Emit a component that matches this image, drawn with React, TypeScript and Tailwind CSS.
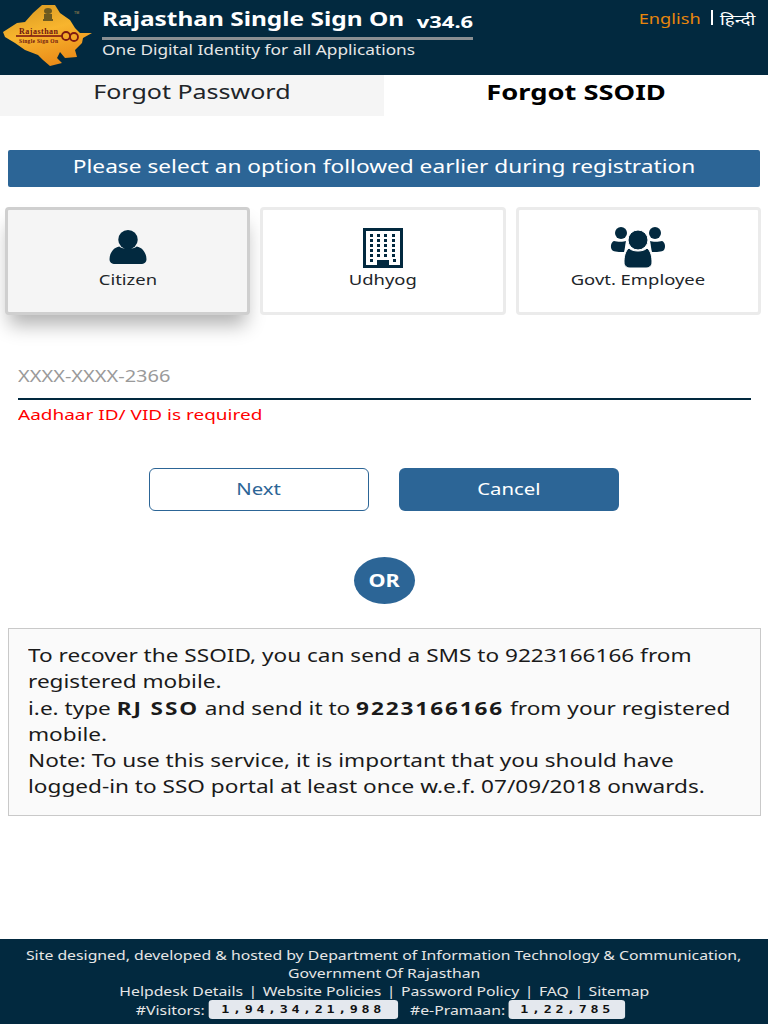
const Logo = () => (
  <svg viewBox="0 0 100 75" className="h-[75px] w-[100px] shrink-0">
    <defs>
      <linearGradient id="rj" x1="0.2" y1="0" x2="0.6" y2="1">
        <stop offset="0" stopColor="#d99a22" />
        <stop offset="0.45" stopColor="#f8b52e" />
        <stop offset="1" stopColor="#ea8a18" />
      </linearGradient>
    </defs>
    <path
      d="M3 32 L17 23 L25 22 L33 13 L42 5 L55 5 L60 13 L70 20 L75 28 L80 33 L92 33 L83 38 L82 43 L75 50 L77 57 L65 58 L60 52 L57 58 L62 63 L50 66 L43 60 L38 55 L25 50 L15 43 L10 40 L5 37 Z"
      fill="url(#rj)"
    />
    <g fill="#6d5a20">
      <ellipse cx="48" cy="11" rx="4" ry="3" />
      <rect x="44" y="14" width="8" height="5" />
      <rect x="43" y="19" width="10" height="2" />
    </g>
    <text x="19" y="34" fontSize="8" fontWeight="700" fill="#6f1410" textLength="39" fontFamily="Liberation Serif, serif">
      Rajasthan
    </text>
    <rect x="16" y="35.2" width="46" height="1.6" fill="#7d1a12" />
    <circle cx="66" cy="36" r="4" fill="none" stroke="#7d1a12" strokeWidth="1.8" />
    <circle cx="74" cy="37" r="4" fill="none" stroke="#7d1a12" strokeWidth="1.8" />
    <text x="19" y="42.5" fontSize="5.5" fontWeight="700" fill="#6f1410" textLength="39" fontFamily="Liberation Serif, serif">
      Single Sign On
    </text>
    <text x="74" y="14" fontSize="3.5" fill="#b99a50" fontFamily="Liberation Sans, sans-serif">
      TM
    </text>
  </svg>
);

const Citizen = () => (
  <svg viewBox="0 0 38 36" className="mb-[3px] h-[35px] w-[38px]" fill="#02293f">
    <ellipse cx="19" cy="10" rx="10" ry="10" />
    <path d="M10 17 C13 20 25 20 28 17 C34 18 38 24 38 30 C38 33 36 35 32 35 H6 C2 35 0 33 0 30 C0 24 4 18 10 17 Z" />
  </svg>
);

const Building = () => (
  <svg viewBox="0 0 40 40" className="h-[40px] w-[40px]">
    <rect width="40" height="40" fill="#02293f" />
    <rect x="3" y="3" width="34" height="34" fill="#fff" />
    <path d="M14 32 h12 v8 h-12 Z" fill="#02293f" />
    <g fill="#02293f">
      {[6, 11, 16, 21, 26].map((y) =>
        [7, 14, 21, 29].map((x) => <rect key={`${x}-${y}`} x={x} y={y} width="3" height="3" />),
      )}
      <rect x="7" y="31" width="3" height="3" />
      <rect x="30" y="31" width="3" height="3" />
    </g>
  </svg>
);

const Group = () => (
  <svg viewBox="0 0 56 41" className="h-[41px] w-[56px]" fill="#02293f">
    <circle cx="11" cy="6" r="6" />
    <circle cx="45" cy="6" r="6" />
    <path d="M4 14 C7 15 14 15 16 14 C15 18 15 22 14 25 C10 25 4 25 2 23 C0 20 1 15 4 14 Z" />
    <path d="M52 14 C49 15 42 15 40 14 C41 18 41 22 42 25 C46 25 52 25 54 23 C56 20 55 15 52 14 Z" />
    <circle cx="28" cy="13" r="10" stroke="#fff" strokeWidth="1" />
    <path d="M19 21 C22 25 34 25 37 21 C41 24 42 30 42 35 C42 39 39 41 36 41 H20 C17 41 14 39 14 35 C14 30 15 24 19 21 Z" stroke="#fff" strokeWidth="1" />
  </svg>
);

const Tile = ({ label, active, icon }: { label: string; active?: boolean; icon: React.ReactNode }) => (
  <div
    className={
      active
        ? "flex h-[108px] flex-col items-center rounded-[4px] border-[3px] border-[#cfcfcf] bg-[#f5f5f5] shadow-[0_14px_18px_-4px_rgba(0,0,0,0.3)]"
        : "flex h-[108px] flex-col items-center rounded-[4px] border-[3px] border-[#ebebeb] bg-white"
    }
  >
    <div className="flex h-[58px] items-end">{icon}</div>
    <span className="scale-x-[1.27] text-[14.5px] leading-[22px] text-[#212529]">{label}</span>
  </div>
);

const Sep = () => <span className="mx-[4.5px]">|</span>;

export default function App() {
  return (
    <div className="flex h-[1024px] flex-col overflow-hidden bg-white font-['Noto_Sans',sans-serif] text-[#212529]">
      <header className="flex h-[75px] bg-[#02293f] pr-[13px]">
        <Logo />
        <div className="ml-[2px] w-[371px] pt-[6px]">
          <div className="flex items-end justify-between border-b-[3px] border-[#8a8f92] pb-[5px] text-white">
            <span className="origin-left scale-x-[1.286] text-[19px] font-bold leading-[26px]">Rajasthan Single Sign On</span>
            <span className="origin-right scale-x-[1.37] text-[16px] font-bold leading-[20px]">v34.6</span>
          </div>
          <div className="origin-left scale-x-[1.28] whitespace-nowrap text-[13.5px] leading-[20px] text-[#e6e6e6]">
            One Digital Identity for all Applications
          </div>
        </div>
        <div className="ml-auto flex items-start pt-[8px] text-[15px] leading-[22px]">
          <span className="origin-right scale-x-[1.3] text-[14px] text-[#e8860c]">English</span>
          <span className="ml-[10px] mr-[14px] mt-[2px] h-[15px] w-[2px] bg-white" />
          <span className="origin-right scale-x-[1.25] text-white">हिन्दी</span>
        </div>
      </header>

      <div className="grid h-[41px] grid-cols-2">
        <div className="flex items-start justify-center bg-[#f5f5f5] pt-[3px]">
          <span className="scale-x-[1.25] text-[20px] leading-[28px] text-[#212529]">Forgot Password</span>
        </div>
        <div className="flex items-start justify-center pt-[3px]">
          <span className="scale-x-[1.3] text-[21px] font-bold leading-[28px] text-black">Forgot SSOID</span>
        </div>
      </div>

      <div className="mx-[8px] mt-[34px] flex h-[37px] items-start justify-center rounded-[2px] bg-[#2c6596] pt-[3px] text-white">
        <span className="scale-x-[1.26] whitespace-nowrap text-[18px] leading-[26px]">Please select an option followed earlier during registration</span>
      </div>

      <div className="mt-[20px] grid grid-cols-3 gap-[10px] pl-[5px] pr-[7px]">
        <Tile label="Citizen" active icon={<Citizen />} />
        <Tile label="Udhyog" icon={<Building />} />
        <Tile label="Govt. Employee" icon={<Group />} />
      </div>

      <div className="mx-[18px] mt-[49px] w-[733px] border-b-2 border-[#02293f] pb-[10px] leading-[24px]">
        <div className="origin-left scale-x-[1.25] text-[16px] text-[#9a9a9a]">XXXX-XXXX-2366</div>
      </div>
      <div className="ml-[18px] mt-[3px] origin-left scale-x-[1.265] text-[15px] leading-[22px] text-[#ff0000]">Aadhaar ID/ VID is required</div>

      <div className="mt-[43px] flex justify-center gap-[30px]">
        <button className="h-[43px] w-[220px] rounded-[6px] border-[1.5px] border-[#2c6596] bg-white pb-[2px] text-[#2c6596]">
          <span className="inline-block scale-x-[1.27] text-[16px]">Next</span>
        </button>
        <button className="h-[43px] w-[220px] rounded-[6px] bg-[#2c6596] pb-[2px] text-white">
          <span className="inline-block scale-x-[1.27] text-[16px]">Cancel</span>
        </button>
      </div>

      <div className="mt-[46px] flex justify-center">
        <div className="flex h-[47px] w-[61px] items-center justify-center rounded-[50%] bg-[#2c6596] text-white">
          <span className="scale-x-[1.2] text-[18px] font-bold">OR</span>
        </div>
      </div>

      <div className="mx-[8px] mt-[24px] h-[188px] w-[753px] border border-[#c9c9c9] bg-[#fafafa] px-[19px] py-[13px]">
        <div className="w-[575px] origin-left scale-x-[1.255] text-[18px] leading-[26.3px] text-[#1a1a1a]">
          To recover the SSOID, you can send a SMS to 9223166166 from registered mobile.
          <br />
          i.e. type <b className="tracking-[1.5px]">RJ SSO</b> and send it to <b className="tracking-[1.5px]">9223166166</b> from your registered mobile.
          <br />
          Note: To use this service, it is important that you should have logged-in to SSO portal at least once w.e.f. 07/09/2018 onwards.
        </div>
      </div>

      <footer className="mt-auto flex h-[85px] flex-col items-center bg-[#02293f] pt-[7px] text-[13px] leading-[18px] text-[#e6e6e6]">
        <div className="scale-x-[1.214] whitespace-nowrap">Site designed, developed &amp; hosted by Department of Information Technology &amp; Communication,</div>
        <div className="scale-x-[1.214] whitespace-nowrap">Government Of Rajasthan</div>
        <div className="scale-x-[1.214] whitespace-nowrap">
          Helpdesk Details
          <Sep />
          Website Policies
          <Sep />
          Password Policy
          <Sep />
          FAQ
          <Sep />
          Sitemap
        </div>
        <div className="mr-[7px] flex scale-x-[1.214] items-center whitespace-nowrap">
          <span>#Visitors:</span>
          <span className="ml-[3px] w-[156px] rounded-[3px] bg-[#e4e8ee] text-center font-['DejaVu_Sans_Mono',monospace] text-[11px] font-bold leading-[19px] tracking-[3px] text-[#111]">
            1,94,34,21,988
          </span>
          <span className="ml-[10px]">#e-Pramaan:</span>
          <span className="ml-[3px] w-[96px] rounded-[3px] bg-[#e4e8ee] text-center font-['DejaVu_Sans_Mono',monospace] text-[11px] font-bold leading-[19px] tracking-[3px] text-[#111]">
            1,22,785
          </span>
        </div>
      </footer>
    </div>
  );
}
